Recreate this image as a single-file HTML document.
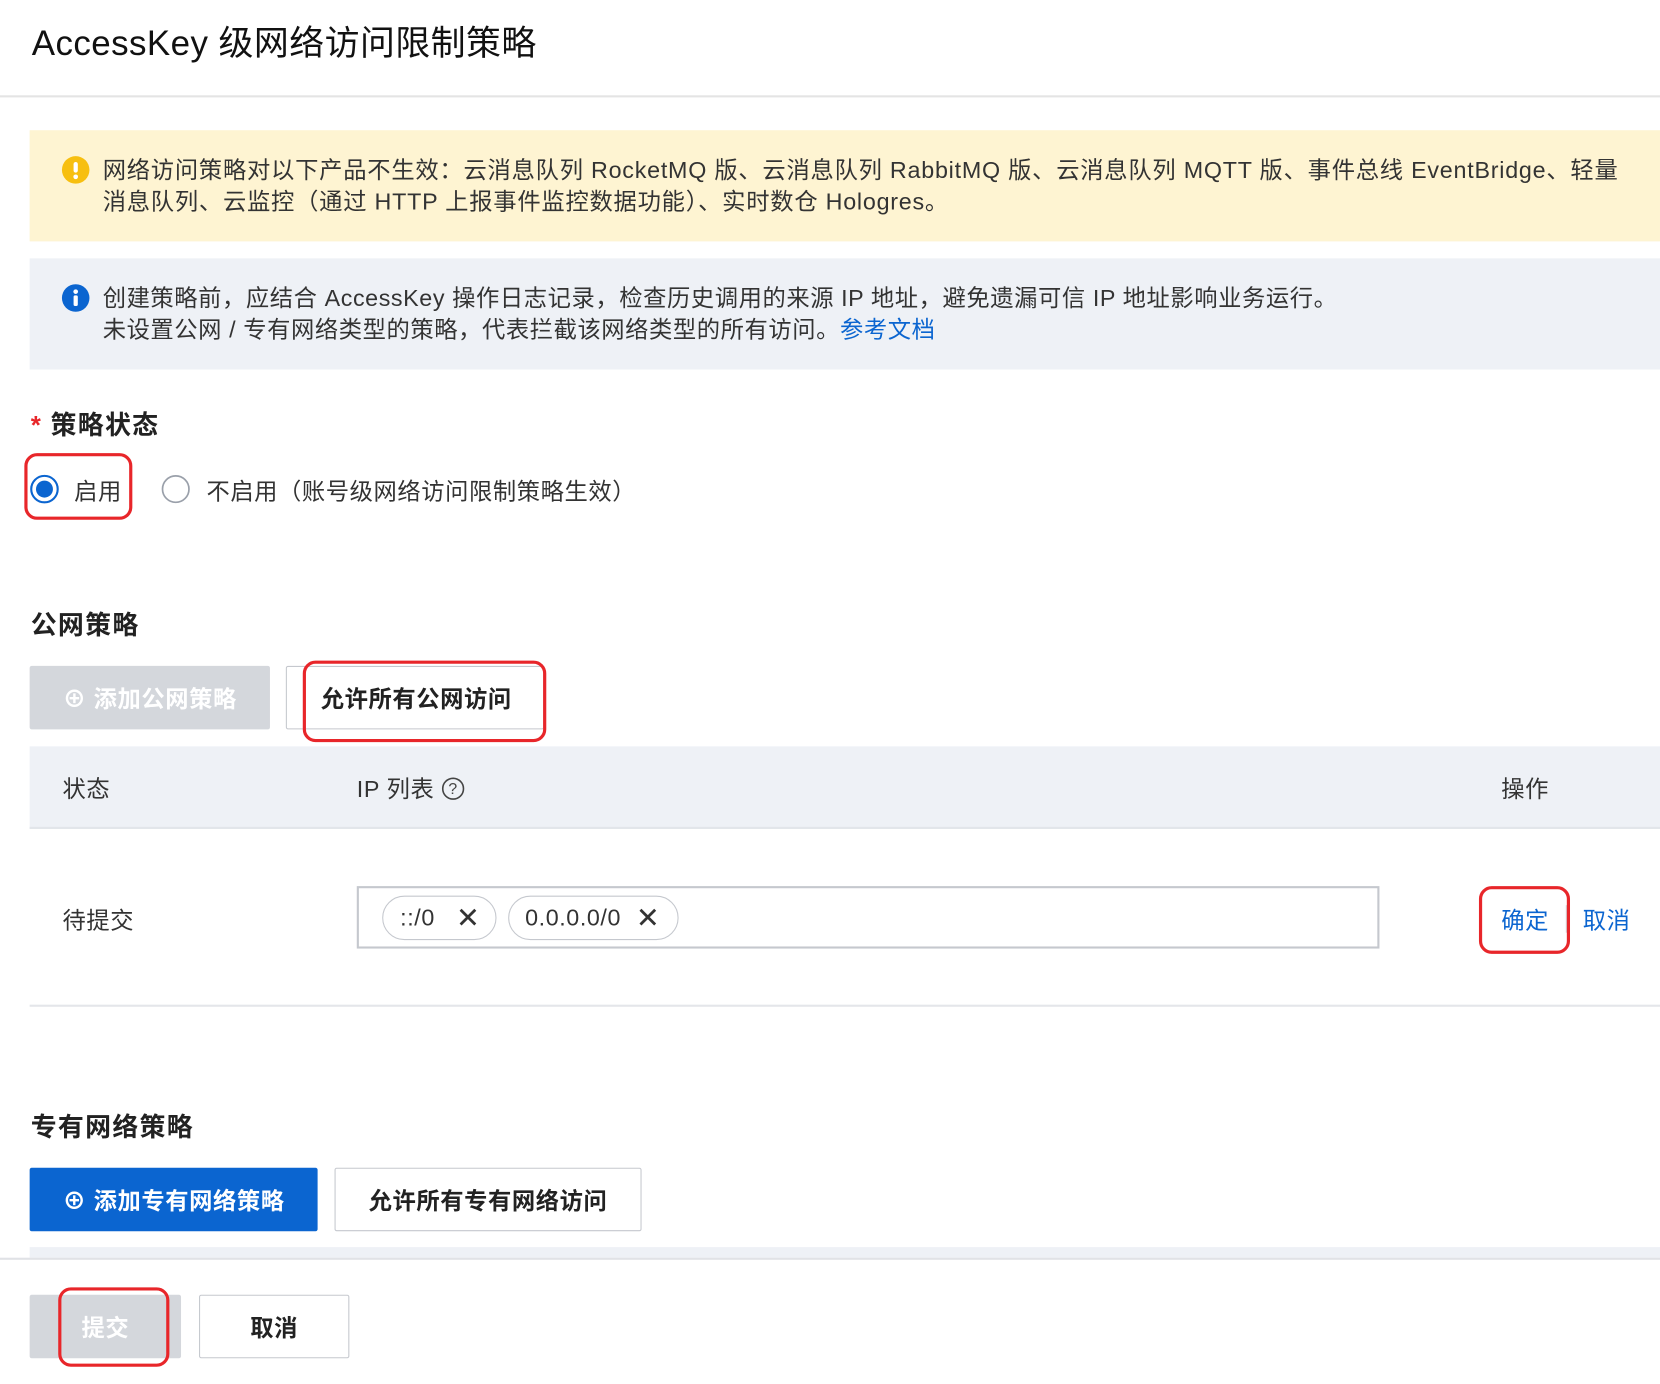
<!DOCTYPE html>
<html><head><meta charset="utf-8"><style>
html,body{margin:0;padding:0;background:#fff;width:1660px;height:1384px;overflow:hidden}
#w{position:absolute;left:0;top:0;width:1568px;height:1307px;transform:scale(1.05867);transform-origin:0 0;font-family:"Liberation Sans","Noto Sans CJK SC",sans-serif;color:#333;font-size:22px;letter-spacing:0.55px}
.a{position:absolute;white-space:nowrap}
.b{font-weight:bold;color:#222}
.h{font-size:24.5px;letter-spacing:1.2px}
.red{position:absolute;border:3px solid #e8262a;border-radius:12px;box-sizing:border-box}
.btn{position:absolute;box-sizing:border-box;display:flex;align-items:center;justify-content:center;font-weight:bold;font-size:22px;border-radius:2px}
.tag{position:absolute;box-sizing:border-box;border:1.5px solid #c5c8ce;border-radius:21px;height:42px;top:846px;display:flex;align-items:center;font-size:22px;color:#333}
</style></head><body><div id="w">
<div class="a" style="left:30px;top:14px;font-size:33px;color:#111;letter-spacing:0.4px">AccessKey 级网络访问限制策略</div>
<div class="a" style="left:0;top:90px;width:1568px;height:2px;background:#e4e4e4"></div>

<div class="a" style="left:28px;top:123px;width:1540px;height:105px;background:#fef4d2"></div>
<svg class="a" style="left:58px;top:147px" width="27" height="27"><circle cx="13.5" cy="13.5" r="13" fill="#f7bf10"/><rect x="11.5" y="6" width="4" height="10" rx="2" fill="#fff"/><circle cx="13.5" cy="20" r="2.2" fill="#fff"/></svg>
<div class="a" style="left:97px;top:146px;line-height:30px;letter-spacing:0.72px">网络访问策略对以下产品不生效：云消息队列 RocketMQ 版、云消息队列 RabbitMQ 版、云消息队列 MQTT 版、事件总线 EventBridge、轻量<br>消息队列、云监控（通过 HTTP 上报事件监控数据功能）、实时数仓 Hologres。</div>

<div class="a" style="left:28px;top:244px;width:1540px;height:105px;background:#eef1f6"></div>
<svg class="a" style="left:58px;top:268px" width="27" height="27"><circle cx="13.5" cy="13.5" r="13" fill="#0b65d0"/><circle cx="13.5" cy="7.5" r="2.2" fill="#fff"/><rect x="11.5" y="11" width="4" height="10" rx="1.5" fill="#fff"/></svg>
<div class="a" style="left:97px;top:267px;line-height:30px">创建策略前，应结合 AccessKey 操作日志记录，检查历史调用的来源 IP 地址，避免遗漏可信 IP 地址影响业务运行。<br>未设置公网 / 专有网络类型的策略，代表拦截该网络类型的所有访问。<span style="color:#0b65d0">参考文档</span></div>

<div class="a b h" style="left:29px;top:383px"><span style="color:#e8262a">*</span> 策略状态</div>
<div class="red" style="left:23px;top:428px;width:102px;height:63px"></div>
<svg class="a" style="left:28px;top:448px" width="28" height="28"><circle cx="14" cy="14" r="12.5" fill="#fff" stroke="#0b65d0" stroke-width="2"/><circle cx="14" cy="14" r="8" fill="#0b65d0"/></svg>
<div class="a" style="left:70px;top:447px">启用</div>
<svg class="a" style="left:152px;top:448px" width="28" height="28"><circle cx="14" cy="14" r="12.5" fill="#fff" stroke="#9aa0aa" stroke-width="1.6"/></svg>
<div class="a" style="left:195px;top:447px">不启用（账号级网络访问限制策略生效）</div>

<div class="a b h" style="left:29px;top:572px">公网策略</div>
<div class="btn" style="left:28px;top:629px;width:227px;height:60px;background:#d4d7dc;color:#fff">⊕ 添加公网策略</div>
<div class="btn" style="left:270px;top:629px;width:244px;height:60px;border:1.5px solid #c5c8ce;color:#222;justify-content:flex-start;padding-left:32px">允许所有公网访问</div>
<div class="red" style="left:286px;top:624px;width:230px;height:77px"></div>

<div class="a" style="left:28px;top:705px;width:1540px;height:76px;background:#eef1f6;border-bottom:2px solid #e2e5ea"></div>
<div class="a" style="left:59px;top:728px">状态</div>
<div class="a" style="left:337px;top:728px">IP 列表 <svg width="22" height="22" style="vertical-align:-3px"><circle cx="11" cy="11" r="9.8" fill="none" stroke="#444" stroke-width="1.5"/><text x="11" y="16" text-anchor="middle" font-size="15" fill="#444" font-family="Liberation Sans">?</text></svg></div>
<div class="a" style="left:1418px;top:728px">操作</div>

<div class="a" style="left:59px;top:852px">待提交</div>
<div class="a" style="left:337px;top:837px;width:966px;height:59px;box-sizing:border-box;border:2px solid #c5c8ce"></div>
<div class="tag" style="left:361px;width:108px;padding-left:16px">::/0<span style="margin-left:20px;font-size:27px">✕</span></div>
<div class="tag" style="left:480px;width:161px;padding-left:15px">0.0.0.0/0<span style="margin-left:14px;font-size:27px">✕</span></div>
<div class="a" style="left:1418px;top:852px;color:#0b65d0">确定</div>
<div class="a" style="left:1479px;top:855px;width:2px;height:26px;background:#d5d8dd"></div>
<div class="a" style="left:1495px;top:852px;color:#0b65d0">取消</div>
<div class="red" style="left:1397px;top:837px;width:86px;height:64px"></div>
<div class="a" style="left:28px;top:949px;width:1540px;height:2px;background:#e4e6ea"></div>

<div class="a b h" style="left:29px;top:1046px">专有网络策略</div>
<div class="btn" style="left:28px;top:1103px;width:272px;height:60px;background:#0b65d0;color:#fff">⊕ 添加专有网络策略</div>
<div class="btn" style="left:316px;top:1103px;width:290px;height:60px;border:1.5px solid #c5c8ce;color:#222">允许所有专有网络访问</div>
<div class="a" style="left:28px;top:1178px;width:1540px;height:10px;background:#eef1f6"></div>
<div class="a" style="left:0;top:1188px;width:1568px;height:2px;background:#e0e2e6"></div>

<div class="btn" style="left:28px;top:1223px;width:143px;height:60px;background:#d4d7dc;color:#fff">提交</div>
<div class="red" style="left:55px;top:1216px;width:105px;height:75px"></div>
<div class="btn" style="left:188px;top:1223px;width:142px;height:60px;border:1.5px solid #c5c8ce;color:#222">取消</div>
</div></body></html>
